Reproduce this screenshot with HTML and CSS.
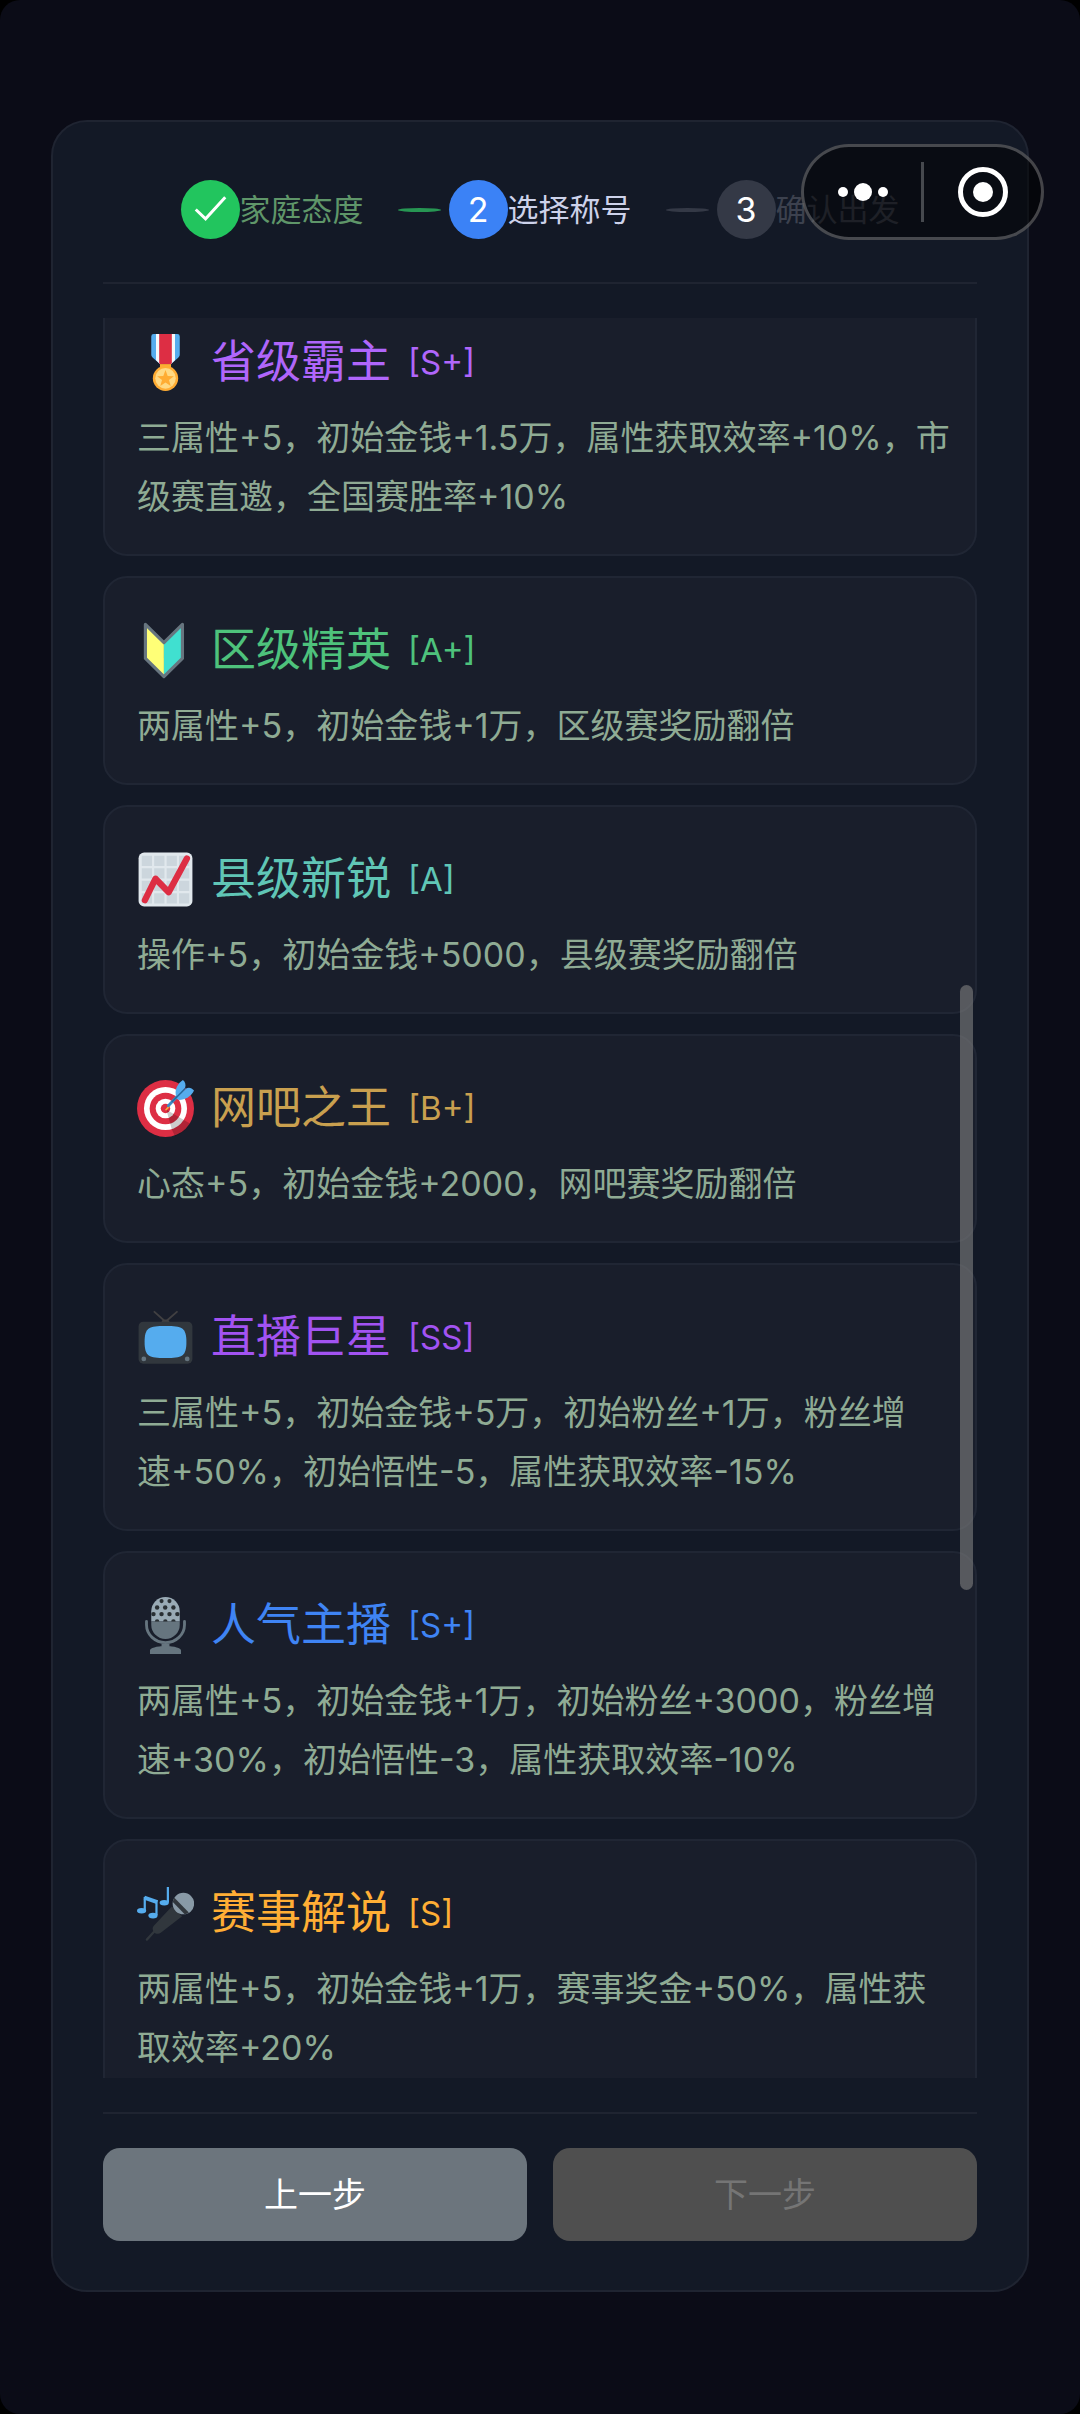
FILE: index.html
```html
<!DOCTYPE html>
<html lang="zh-CN">
<head>
  <meta charset="UTF-8">
  <meta name="viewport" content="width=device-width, initial-scale=1.0">
  <title>选择称号</title>
  <link rel="stylesheet" href="styles.css">
</head>
<body>
<div class="screen">
  <div class="panel">
    <ol class="steps">
      <li class="step done">
        <span class="step-dot">
          <svg viewBox="0 0 60 60" aria-hidden="true"><path d="M15 30l10 9.500L45 17.500" fill="none" stroke="#fff" stroke-width="3"/></svg>
        </span>
        <span class="step-label">家庭态度</span>
      </li>
      <li class="step-line done"></li>
      <li class="step active">
        <span class="step-dot">2</span>
        <span class="step-label">选择称号</span>
      </li>
      <li class="step-line"></li>
      <li class="step">
        <span class="step-dot">3</span>
        <span class="step-label">确认出发</span>
      </li>
    </ol>

    <div class="list-wrap">
      <div class="list">
        <button class="card" type="button">
          <span class="card-head provincial">
            <svg class="icon" viewBox="0 0 36 36" aria-hidden="true">
              <path fill="#55ACEE" d="M10.500 0h15A1.500 1.500 0 0 1 27 1.500V13c0 .8-.4 1.500-1 2l-4.500 4h-7L10 15c-.6-.5-1-1.200-1-2V1.500A1.500 1.500 0 0 1 10.500 0z"/>
              <path fill="#F5F8FA" d="M12 0h12v16.500L21.500 19h-7L12 16.500z"/>
              <path fill="#DD2E44" d="M14 0h8v18.500l-.5.5h-7l-.5-.5z"/>
              <path fill="#FFAC33" d="M14.500 19h7v4h-7z"/>
              <circle cx="18" cy="28" r="8" fill="#FFAC33"/>
              <circle cx="18" cy="28" r="6.500" fill="#FFD983"/>
              <path fill="#FFAC33" d="M18 22.800l1.400 3.700 3.900.2-3.100 2.400 1.100 3.800L18 30.700l-3.300 2.200 1.100-3.800-3.100-2.400 3.900-.2z"/>
            </svg>
            <span class="name">省级霸主</span>
            <span class="rank">[S+]</span>
          </span>
          <span class="desc">三属性+5，初始金钱+1.5万，属性获取效率+10%，市级赛直邀，全国赛胜率+10%</span>
        </button>

        <button class="card" type="button">
          <span class="card-head district">
            <svg class="icon" viewBox="0 0 36 36" aria-hidden="true">
              <path fill="#FFFF77" d="M5.300 1.500L17 13v21L5.300 23z"/>
              <path fill="#40E0D0" d="M28.700 1.500L17 13v21l11.700-11z"/>
              <path fill="none" stroke="#67757F" stroke-width="2" stroke-linejoin="round" d="M5.300 1.500L17 13 28.700 1.500V23L17 34.500 5.300 23z"/>
            </svg>
            <span class="name">区级精英</span>
            <span class="rank">[A+]</span>
          </span>
          <span class="desc">两属性+5，初始金钱+1万，区级赛奖励翻倍</span>
        </button>

        <button class="card" type="button">
          <span class="card-head county">
            <svg class="icon" viewBox="0 0 36 36" aria-hidden="true">
              <rect x="1" y="1" width="34" height="34" rx="3.500" fill="#E1E8ED"/>
              <path stroke="#CCD6DD" stroke-width="6.500" stroke-dasharray="6.500 1.350" d="M3 6.200h30M3 14.100h30M3 22h30M3 29.900h30"/>
              <path fill="none" stroke="#DD2E44" stroke-width="4" stroke-linecap="round" stroke-linejoin="round" d="M5 31l6.700-13.500L20 26 31.500 4.700"/>
            </svg>
            <span class="name">县级新锐</span>
            <span class="rank">[A]</span>
          </span>
          <span class="desc">操作+5，初始金钱+5000，县级赛奖励翻倍</span>
        </button>

        <button class="card" type="button">
          <span class="card-head netbar">
            <svg class="icon" viewBox="0 0 36 36" aria-hidden="true">
              <circle cx="18" cy="18" r="18" fill="#DD2E44"/>
              <circle cx="18" cy="18" r="13.600" fill="#fff"/>
              <circle cx="18" cy="18" r="10" fill="#DD2E44"/>
              <circle cx="18" cy="18" r="6.200" fill="#fff"/>
              <circle cx="18" cy="18" r="3" fill="#DD2E44"/>
              <path fill="#000" opacity=".2" d="M18.500 18.700l3.500 12.500 2 4.300c4-1.500 7.300-4.200 9.500-8l-8.500-5z"/>
              <path fill="#FFAC33" d="M17.600 18.900l2.600-3 .9.800-2.600 2.600z"/>
              <path fill="none" stroke="#3B88C3" stroke-width="1.800" stroke-linecap="round" d="M19.800 16.200l9-9.400"/>
              <path fill="#55ACEE" d="M24.500 9.500c-.6-3.500 1-7.200 4.500-9.500 1.500 1.200 2 3 1.400 4.900L25.500 11z"/>
              <path fill="#55ACEE" d="M25 11.800l5.800-6.300c1.800-1.200 3.800-.6 5.200 1.200-1.800 3.800-5.600 5.900-9.500 5.900z"/>
              <path stroke="#269" stroke-width=".8" d="M22 13.800l8.600-8.600"/>
            </svg>
            <span class="name">网吧之王</span>
            <span class="rank">[B+]</span>
          </span>
          <span class="desc">心态+5，初始金钱+2000，网吧赛奖励翻倍</span>
        </button>

        <button class="card" type="button">
          <span class="card-head star">
            <svg class="icon" viewBox="0 0 36 36" aria-hidden="true">
              <path fill="none" stroke="#414042" stroke-width="1.200" stroke-linecap="round" d="M11 1.800L18 8l7.200-6.200"/>
              <path fill="#414042" d="M15.500 8.500a2.500 1.800 0 0 1 5 0z"/>
              <rect x="1" y="8" width="34" height="26.500" rx="3" fill="#31373D"/>
              <path fill="#55ACEE" d="M18 10.800c10.500 0 13.200 1 13.200 10.100S28.500 31 18 31 4.800 30 4.800 20.900 7.500 10.800 18 10.800z"/>
              <circle cx="4.300" cy="31.500" r="1.500" fill="#66757F"/>
              <circle cx="31.700" cy="31.500" r="1.500" fill="#66757F"/>
            </svg>
            <span class="name">直播巨星</span>
            <span class="rank">[SS]</span>
          </span>
          <span class="desc">三属性+5，初始金钱+5万，初始粉丝+1万，粉丝增<span class="keep">速+50%</span>，初始悟性-5，属性获取效率-15%</span>
        </button>

        <button class="card" type="button">
          <span class="card-head anchor">
            <svg class="icon" viewBox="0 0 36 36" aria-hidden="true">
              <path fill="#99AAB5" d="M9 15.500V9a9 9 0 0 1 18 0v6.500z"/>
              <path fill="#66757F" d="M9 15.400h18V17.500a9 9 0 0 1-18 0z"/>
              <g fill="#292F33">
                <circle cx="15.500" cy="2.600" r="1.300"/><circle cx="20.500" cy="2.600" r="1.300"/>
                <circle cx="12.700" cy="6.600" r="1.400"/><circle cx="17.800" cy="6.600" r="1.400"/><circle cx="23" cy="6.600" r="1.400"/>
                <circle cx="10.400" cy="10.800" r="1.400"/><circle cx="15.500" cy="10.800" r="1.400"/><circle cx="20.500" cy="10.800" r="1.400"/><circle cx="25.500" cy="10.800" r="1.400"/>
                <path d="M11.300 15.400a1.400 1.400 0 0 1 2.800 0zM16.500 15.400a1.400 1.400 0 0 1 2.800 0zM21.600 15.400a1.400 1.400 0 0 1 2.800 0z"/>
              </g>
              <path fill="none" stroke="#66757F" stroke-width="1.800" stroke-linecap="round" d="M6 15.500v2a12 11.300 0 0 0 24 0v-2"/>
              <path fill="#66757F" d="M15.500 29.500h5v2h-5zM8.200 36v-2.200c0-1.400 4-2.800 9.800-2.800s9.800 1.400 9.800 2.800V36z"/>
            </svg>
            <span class="name">人气主播</span>
            <span class="rank">[S+]</span>
          </span>
          <span class="desc">两属性+5，初始金钱+1万，初始粉丝+3000，粉丝增<span class="keep">速+30%</span>，初始悟性-3，属性获取效率-10%</span>
        </button>

        <button class="card" type="button">
          <span class="card-head caster">
            <svg class="icon" viewBox="0 0 36 36" aria-hidden="true">
              <path fill="none" stroke="#31373D" stroke-width="1.400" stroke-linecap="round" d="M6.200 34.500l6-6.500"/>
              <path fill="#31373D" d="M22 13.500l6.500 6.300L15.200 30c-1.500 1.200-3.200 1-4.400-.2-1.200-1.300-1.200-2.800-.2-4z"/>
              <circle cx="29.300" cy="11.700" r="6.800" fill="#8899A6"/>
              <path fill="#31373D" d="M22.600 10.800c.2-1 .5-1.900 1-2.700l9.100 9.300c-.8.6-1.700 1-2.600 1.100z"/>
              <g fill="none" stroke="#55ACEE">
                <path stroke-width="1.400" d="M4.900 16V7.500M12.300 19V9.500M19.500 11V1.200"/>
                <path stroke-width="2.600" d="M4.600 8l8.200 2.800"/>
              </g>
              <g fill="#55ACEE">
                <ellipse cx="2.900" cy="16.300" rx="2.900" ry="1.700"/>
                <ellipse cx="10.100" cy="19.300" rx="2.900" ry="1.800"/>
                <ellipse cx="17.200" cy="11.200" rx="2.900" ry="1.700"/>
              </g>
            </svg>
            <span class="name">赛事解说</span>
            <span class="rank">[S]</span>
          </span>
          <span class="desc">两属性+5，初始金钱+1万，赛事奖金+50%，属性获取效率+20%</span>
        </button>
      </div>
      <div class="scroll-thumb"></div>
    </div>

    <div class="actions">
      <button class="btn" type="button">上一步</button>
      <button class="btn" type="button" disabled>下一步</button>
    </div>
  </div>

  <!-- mini program capsule -->
  <div class="capsule">
    <button type="button" aria-label="更多">
      <svg width="50" height="20" viewBox="0 0 50 20" fill="#fff"><circle cx="5" cy="10" r="5"/><circle cx="25" cy="10" r="9"/><circle cx="45" cy="10" r="5"/></svg>
    </button>
    <button type="button" aria-label="关闭">
      <svg width="50" height="50" viewBox="0 0 50 50"><circle cx="25" cy="25" r="22.500" fill="none" stroke="#fff" stroke-width="5"/><circle cx="25" cy="25" r="10" fill="#fff"/></svg>
    </button>
  </div>
</div>
</body>
</html>
```
FILE: styles.css
```css
* {
  box-sizing: border-box;
}

body {
  margin: 0;
  background: #000;
  color: #fff;
  font-family: Inter, "Noto Sans CJK SC", sans-serif;
}

button {
  font-family: inherit;
  cursor: pointer;
}

.screen {
  position: relative;
  display: flex;
  height: 100vh;
  padding: 120px 51px 122px;
  background: #0b0c17;
  border-radius: 20px;
}

.panel {
  flex: 1;
  display: flex;
  flex-direction: column;
  min-width: 0;
  padding: 0 50px 49px;
  background: #131926;
  border: 2px solid #1f2431;
  border-radius: 36px;
}

/* steps */
.steps {
  display: flex;
  align-items: center;
  justify-content: center;
  margin: 0;
  padding: 58px 0 43px;
  list-style: none;
  border-bottom: 2px solid #1f2431;
}

.step {
  display: flex;
  align-items: center;
  color: #3c414e;
}

.step-dot {
  display: flex;
  align-items: center;
  justify-content: center;
  width: 59px;
  height: 59px;
  border-radius: 50%;
  background: #343946;
  color: #fff;
  font-size: 34px;
}

.step-label {
  font-size: 31px;
  line-height: 40px;
  white-space: nowrap;
}

.step.done { color: #5f9669; }
.step.done .step-dot { background: #22c55e; }
.step.active { color: #cdd2ea; }
.step.active .step-dot { background: #3b82f6; }

.step-line {
  width: 43px;
  height: 4px;
  margin: 0 8px 0 34px;
  border-radius: 50%;
  background: #343946;
}

.step-line.done {
  background: #279653;
}

/* title list */
.list-wrap {
  position: relative;
  flex: 1;
  min-height: 0;
  margin: 34px 0;
}

.list {
  height: 100%;
  display: flex;
  flex-direction: column;
  gap: 20px;
  overflow: hidden;
}

.card {
  flex: none;
  display: block;
  width: 100%;
  padding: 26px 20px 28px 32px;
  text-align: left;
  color: inherit;
  background: #191e2b;
  border: 2px solid #202634;
  border-radius: 24px;
}

/* list is scrolled a little past its first card */
.card:first-child {
  margin-top: -30px;
}

.card-head {
  display: flex;
  align-items: center;
  gap: 17px;
  height: 92px;
}

.icon {
  width: 57px;
  height: 57px;
}

.name {
  font-size: 45px;
  line-height: 60px;
}

.rank {
  font-size: 33px;
  line-height: 60px;
}

.desc {
  display: block;
  color: #8fab94;
  font-size: 34px;
  line-height: 59px;
}

.keep {
  white-space: nowrap;
}

.provincial { color: #b066fb; }
.district { color: #4ec27c; }
.county { color: #60c6b6; }
.netbar { color: #c9a04f; }
.star { color: #a253f2; }
.anchor { color: #3f84f4; }
.caster { color: #ffae35; }

.scroll-thumb {
  position: absolute;
  top: 667px;
  right: 4px;
  width: 13px;
  height: 605px;
  border-radius: 7px;
  background: rgba(128, 128, 128, 0.6);
}

/* footer */
.actions {
  display: flex;
  gap: 26px;
  padding-top: 34px;
  border-top: 2px solid #1f2431;
}

.btn {
  flex: 1;
  height: 93px;
  padding: 0;
  border: 0;
  border-radius: 17px;
  background: #6c757d;
  color: #fff;
  font-size: 34px;
  line-height: 40px;
}

.btn:disabled {
  background: #4f4f4f;
  color: #757575;
  cursor: default;
}

.capsule {
  position: absolute;
  top: 144px;
  right: 36px;
  display: flex;
  align-items: center;
  width: 243px;
  height: 96px;
  border: 3px solid rgba(255, 255, 255, 0.25);
  border-radius: 48px;
  background: rgba(0, 0, 0, 0.5);
}

.capsule button {
  flex: 1;
  display: flex;
  align-items: center;
  justify-content: center;
  height: 60px;
  padding: 0;
  border: 0;
  background: none;
}

.capsule button + button {
  border-left: 3px solid rgba(255, 255, 255, 0.25);
}
```
